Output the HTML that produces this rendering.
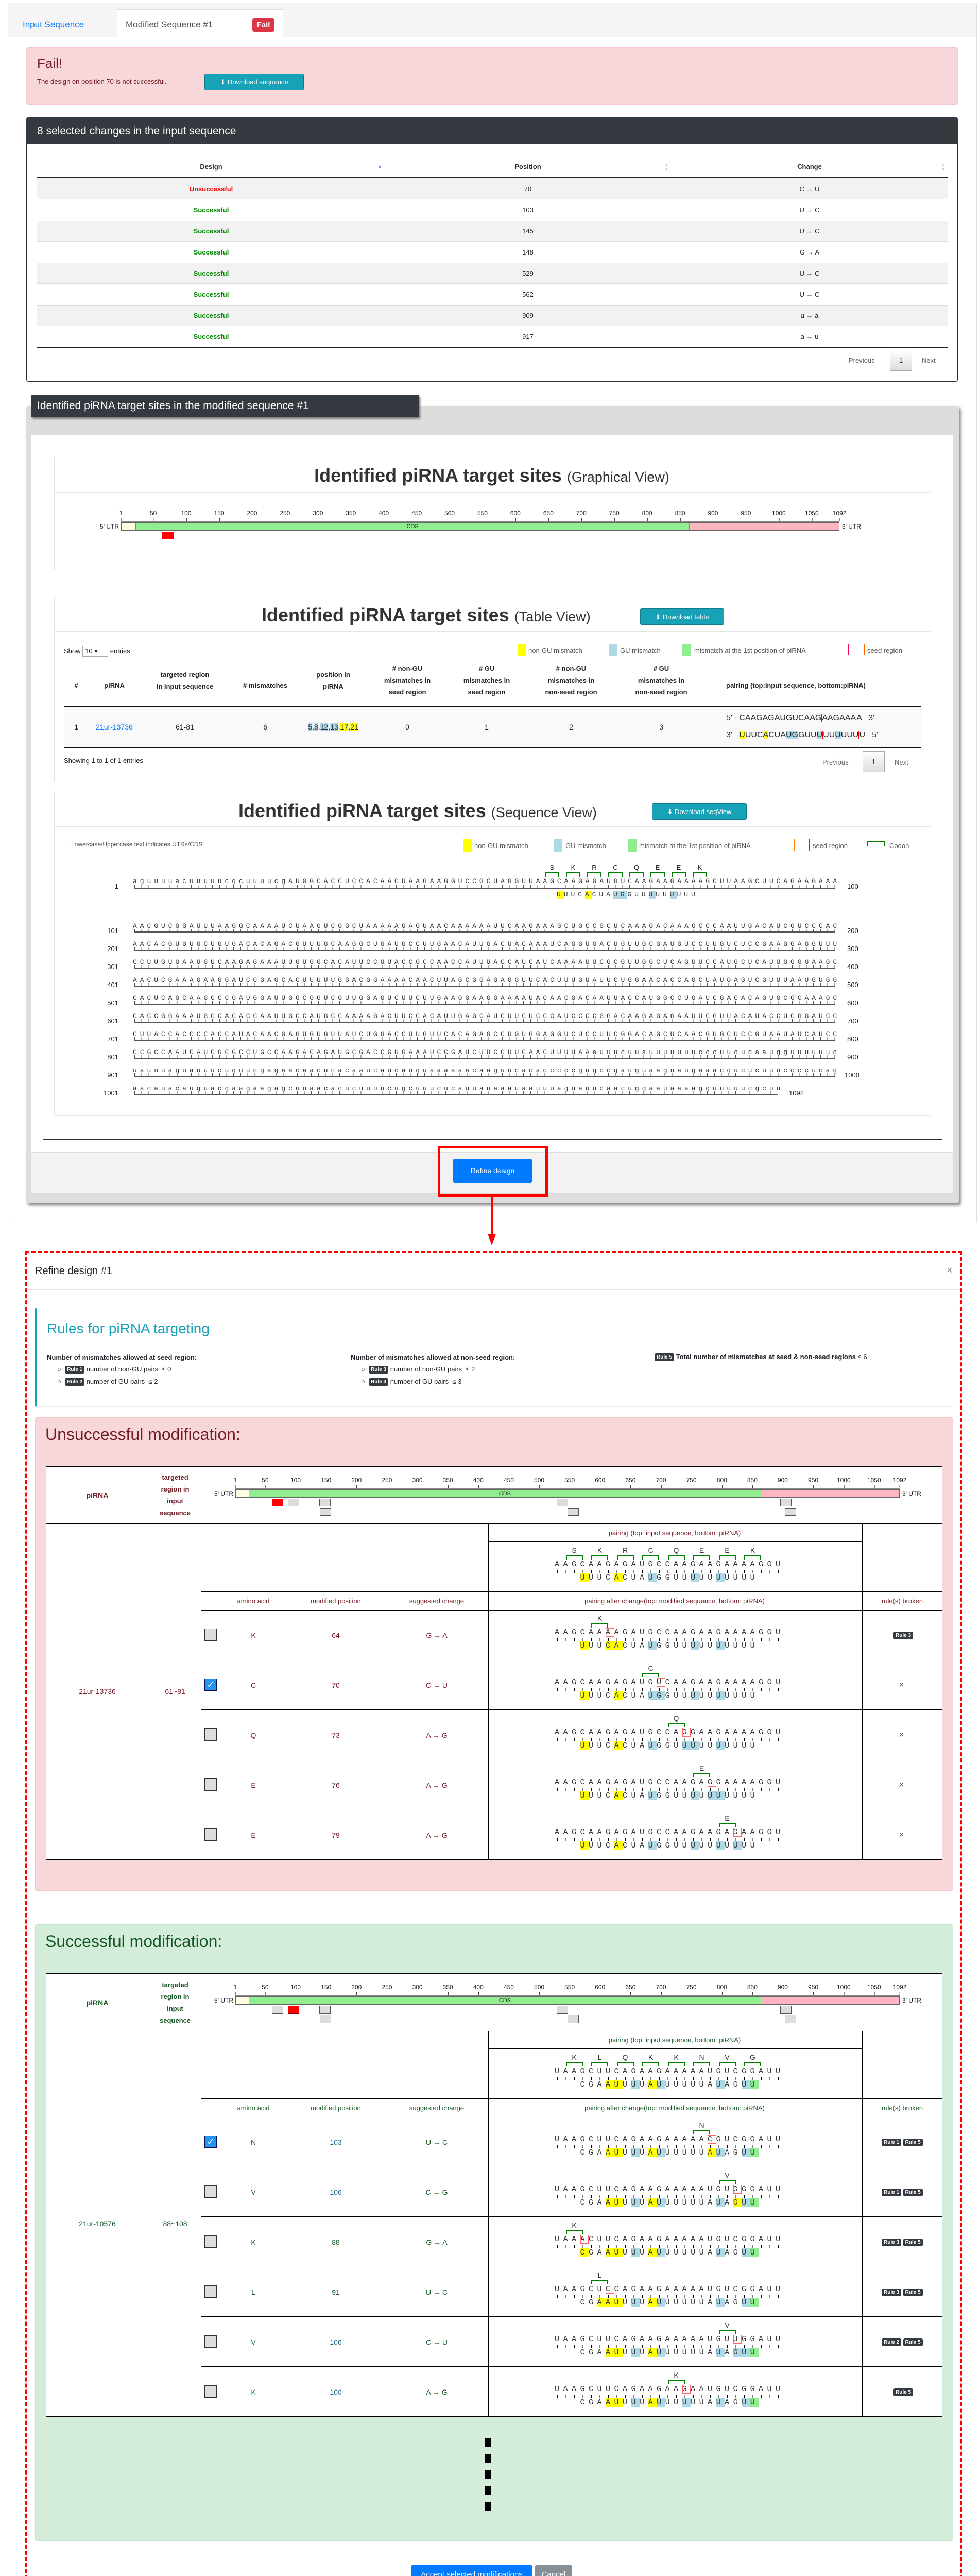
<!DOCTYPE html>
<html><head><meta charset="utf-8">
<style>
*{box-sizing:border-box;margin:0;padding:0}
html,body{margin:0;padding:0;background:#fff}
#w{width:1903px;height:5057px;position:relative;overflow:hidden;background:#fff;font-family:"Liberation Sans",sans-serif;color:#212529;font-size:13px}
.a{position:absolute}
.c{transform:translateX(-50%);white-space:nowrap}
.badge{display:inline-block;background:#343a40;color:#fff;font-size:10px;font-weight:bold;padding:2px 4px;border-radius:3px;vertical-align:middle}
.btn{position:absolute;color:#fff;border-radius:3px;text-align:center;font-size:13px}
.rul{position:absolute;height:44px}
.rul .n{position:absolute;top:0;transform:translateX(-50%);font-size:12px;line-height:16px;white-space:nowrap}
.rul .n::after{content:"";position:absolute;left:50%;top:17px;width:1px;height:7px;background:#444}
.rul .ax{position:absolute;left:0;right:0;top:23px;height:2px;background:#888}
.rul .bar{position:absolute;left:0;right:0;top:26px;height:16px;border:1px solid #666;background:#ffb6c1}
.rul .u5{position:absolute;left:0;top:0;bottom:0;width:2%;background:#fffde2;border-right:1px solid #888}
.rul .cds{position:absolute;left:2%;top:0;bottom:0;width:77.2%;background:#90ee90;border-right:1px solid #888;text-align:center;font-size:11px;line-height:14px}
.rul .l5{position:absolute;right:100%;top:26px;margin-right:4px;font-size:12px;white-space:nowrap;line-height:16px}
.rul .l3{position:absolute;left:100%;top:26px;margin-left:5px;font-size:12px;white-space:nowrap;line-height:16px}
.gb{position:absolute;width:22px;height:15px;background:#ddd;border:1px solid #555}
.rb{position:absolute;width:22px;height:15px;background:#f00;border:1px solid #800}
.seq{position:absolute;left:258px;width:1380px;overflow:hidden;font:13px/16px "Liberation Mono",monospace;letter-spacing:5.93px;white-space:pre;color:#333}
.tk{position:absolute;left:261px;height:7px;border-bottom:2px solid #555;background:repeating-linear-gradient(to right,#555 0 1px,transparent 1px 13.73px)}
.num{position:absolute;width:40px;text-align:right;left:190px;font-size:13px}
.pb{position:absolute;left:1077px;width:470px;height:90px}
.pb .am{position:absolute;top:8px;font-size:14px;transform:translateX(-50%);color:#333}
.pb .br{position:absolute;top:25px;height:9px;width:33px;border:2px solid green;border-bottom:none}
.pb .s{position:absolute;top:34px;left:0;font:15px/20px "Liberation Mono",monospace;letter-spacing:7.5px;white-space:pre;color:#333}
.pb .t{position:absolute;top:54px;left:5px;width:430px;height:7px;border-bottom:1px solid #000;background:repeating-linear-gradient(to right,#000 0 1px,transparent 1px 16.5px)}
.pb .p{top:60px;left:49.5px}
.y{background:#ffff00}.b{background:#add8e6}.g{background:#90ee90}.m{outline:1.5px solid #f66;outline-offset:-1px}
.sh{position:absolute;width:1px;background:#000}
.hl{position:absolute;height:1px;background:#000}
.cb{position:absolute;left:397px;width:24px;height:24px;background:#ddd;border:1px solid #333}
.cbk{position:absolute;left:397px;width:24px;height:24px;background:#2196f3;border:1px solid #114;color:#fff;font-size:18px;line-height:22px;text-align:center}
.cell{position:absolute;transform:translateX(-50%);font-size:14px;white-space:nowrap}
.x{position:absolute;left:1745px;font-size:18px;color:#555}
</style></head><body><div id="w">

<div class="a" style="left:15px;top:5px;width:1882px;height:2369px;border:1px solid #ddd;border-radius:3px"></div>
<div class="a" style="left:16px;top:6px;width:1880px;height:66px;background:#f5f5f5;border-bottom:1px solid #ddd"></div>
<div class="a" style="left:227px;top:18px;width:323px;height:55px;background:#fff;border:1px solid #ddd;border-bottom:none"></div>
<div class="a" style="left:44px;top:38px;font-size:17px;color:#007bff">Input Sequence</div>
<div class="a" style="left:244px;top:38px;font-size:17px;color:#495057">Modified Sequence #1</div>
<div class="a" style="left:490px;top:35px;width:43px;height:27px;background:#dc3545;color:#fff;font-weight:bold;border-radius:4px;text-align:center;line-height:27px;font-size:15px">Fail</div>

<div class="a" style="left:51px;top:92px;width:1809px;height:111px;background:#f8d7da;border:1px solid #f5c6cb;border-radius:4px"></div>
<div class="a" style="left:72px;top:108px;font-size:26px;color:#721c24">Fail!</div>
<div class="a" style="left:72px;top:151px;font-size:13px;color:#721c24">The design on position 70 is not successful.</div>
<div class="btn" style="left:397px;top:143px;width:193px;height:32px;background:#17a2b8;line-height:32px;border:1px solid #117a8b">&#11015; Download sequence</div>

<div class="a" style="left:51px;top:228px;width:1809px;height:513px;border:1px solid #333;border-radius:4px"></div>
<div class="a" style="left:51px;top:228px;width:1809px;height:52px;background:#343a40;border-radius:4px 4px 0 0"></div>
<div class="a" style="left:72px;top:243px;font-size:21px;color:#fff">8 selected changes in the input sequence</div>
<div class="hl" style="left:72px;top:300px;width:1769px;background:#ddd"></div>
<div class="hl" style="left:72px;top:344px;width:1769px;height:2px;background:#222"></div>
<div class="cell" style="left:410px;top:316px;font-weight:bold;font-size:13px">Design</div>
<div class="cell" style="left:1025px;top:316px;font-weight:bold;font-size:13px">Position</div>
<div class="cell" style="left:1572px;top:316px;font-weight:bold;font-size:13px">Change</div>
<div class="a" style="left:733px;top:320px;color:#7a7ae0;font-size:9px">&#9660;</div>
<div class="a" style="left:1290px;top:316px;color:#ccc;font-size:9px;line-height:8px">&#9650;<br>&#9660;</div>
<div class="a" style="left:1827px;top:316px;color:#ccc;font-size:9px;line-height:8px">&#9650;<br>&#9660;</div>
<div class="a" style="left:72px;top:346px;width:1769px;height:41px;background:#f2f2f2"></div>
<div class="a" style="left:72px;top:428px;width:1769px;height:41px;background:#f2f2f2;border-top:1px solid #ddd;border-bottom:1px solid #ddd"></div>
<div class="a" style="left:72px;top:510px;width:1769px;height:41px;background:#f2f2f2;border-top:1px solid #ddd;border-bottom:1px solid #ddd"></div>
<div class="a" style="left:72px;top:592px;width:1769px;height:41px;background:#f2f2f2;border-top:1px solid #ddd;border-bottom:1px solid #ddd"></div>
<div class="hl" style="left:72px;top:673px;width:1769px;height:2px;background:#222"></div>
<div class="cell" style="left:410px;top:359px;color:#f00;font-weight:bold;font-size:13px">Unsuccessful</div>
<div class="cell" style="left:410px;top:400px;color:#080;font-weight:bold;font-size:13px">Successful</div>
<div class="cell" style="left:410px;top:441px;color:#080;font-weight:bold;font-size:13px">Successful</div>
<div class="cell" style="left:410px;top:482px;color:#080;font-weight:bold;font-size:13px">Successful</div>
<div class="cell" style="left:410px;top:523px;color:#080;font-weight:bold;font-size:13px">Successful</div>
<div class="cell" style="left:410px;top:564px;color:#080;font-weight:bold;font-size:13px">Successful</div>
<div class="cell" style="left:410px;top:605px;color:#080;font-weight:bold;font-size:13px">Successful</div>
<div class="cell" style="left:410px;top:646px;color:#080;font-weight:bold;font-size:13px">Successful</div>
<div class="cell" style="left:1025px;top:359px;font-size:13px">70</div>
<div class="cell" style="left:1025px;top:400px;font-size:13px">103</div>
<div class="cell" style="left:1025px;top:441px;font-size:13px">145</div>
<div class="cell" style="left:1025px;top:482px;font-size:13px">148</div>
<div class="cell" style="left:1025px;top:523px;font-size:13px">529</div>
<div class="cell" style="left:1025px;top:564px;font-size:13px">562</div>
<div class="cell" style="left:1025px;top:605px;font-size:13px">909</div>
<div class="cell" style="left:1025px;top:646px;font-size:13px">917</div>
<div class="cell" style="left:1572px;top:359px;font-size:13px">C → U</div>
<div class="cell" style="left:1572px;top:400px;font-size:13px">U → C</div>
<div class="cell" style="left:1572px;top:441px;font-size:13px">U → C</div>
<div class="cell" style="left:1572px;top:482px;font-size:13px">G → A</div>
<div class="cell" style="left:1572px;top:523px;font-size:13px">U → C</div>
<div class="cell" style="left:1572px;top:564px;font-size:13px">U → C</div>
<div class="cell" style="left:1572px;top:605px;font-size:13px">u → a</div>
<div class="cell" style="left:1572px;top:646px;font-size:13px">a → u</div>
<div class="a" style="left:1648px;top:692px;color:#666;font-size:13px">Previous</div>
<div class="a" style="left:1728px;top:679px;width:43px;height:41px;border:1px solid #aaa;background:linear-gradient(#fff,#ddd);text-align:center;line-height:39px;color:#333;font-size:13px">1</div>
<div class="a" style="left:1790px;top:692px;color:#666;font-size:13px">Next</div>

<div class="a" style="left:51px;top:788px;width:1812px;height:1547px;background:#ddd;box-shadow:3px 4px 6px #888;border-radius:4px"></div>
<div class="a" style="left:61px;top:767px;width:753px;height:43px;background:#343a40;box-shadow:2px 3px 4px #777"></div>
<div class="a" style="left:72px;top:776px;font-size:21px;color:#fff">Identified piRNA target sites in the modified sequence #1</div>
<div class="a" style="left:61px;top:845px;width:1790px;height:1391px;background:#fff"></div>
<div class="a" style="left:61px;top:2236px;width:1790px;height:79px;background:#f2f2f2;border-top:1px solid #ddd"></div>
<div class="hl" style="left:83px;top:865px;width:1747px;background:#333"></div>
<div class="hl" style="left:83px;top:2211px;width:1747px;background:#333"></div>

<div class="a" style="left:105px;top:887px;width:1703px;height:220px;border:1px solid #e5e5e5"></div>
<div class="hl" style="left:105px;top:955px;width:1703px;background:#e5e5e5"></div>
<div class="a c" style="left:955px;top:902px;font-size:36px;font-weight:bold;color:#333">Identified piRNA target sites <span style="font-weight:normal;font-size:27px">(Graphical View)</span></div>
<div class="rul" style="left:235px;top:988px;width:1395px">
<span class="n" style="left:0%">1</span><span class="n" style="left:4.49%">50</span><span class="n" style="left:9.07%">100</span><span class="n" style="left:13.66%">150</span><span class="n" style="left:18.24%">200</span><span class="n" style="left:22.82%">250</span><span class="n" style="left:27.41%">300</span><span class="n" style="left:31.99%">350</span><span class="n" style="left:36.57%">400</span><span class="n" style="left:41.16%">450</span><span class="n" style="left:45.74%">500</span><span class="n" style="left:50.32%">550</span><span class="n" style="left:54.9%">600</span><span class="n" style="left:59.49%">650</span><span class="n" style="left:64.07%">700</span><span class="n" style="left:68.65%">750</span><span class="n" style="left:73.24%">800</span><span class="n" style="left:77.82%">850</span><span class="n" style="left:82.4%">900</span><span class="n" style="left:86.98%">950</span><span class="n" style="left:91.57%">1000</span><span class="n" style="left:96.15%">1050</span><span class="n" style="left:100%">1092</span>
<div class="ax"></div><div class="bar"><div class="u5"></div><div class="cds">CDS</div></div><span class="l5">5' UTR</span><span class="l3">3' UTR</span></div>
<div class="rb" style="left:314px;top:1032px;width:24px"></div>

<div class="a" style="left:105px;top:1156px;width:1703px;height:362px;border:1px solid #e5e5e5"></div>
<div class="hl" style="left:105px;top:1225px;width:1703px;background:#e5e5e5"></div>
<div class="a" style="left:508px;top:1173px;font-size:36px;font-weight:bold;color:#333;white-space:nowrap">Identified piRNA target sites <span style="font-weight:normal;font-size:27px">(Table View)</span></div>
<div class="btn" style="left:1243px;top:1181px;width:163px;height:32px;background:#17a2b8;line-height:32px;border:1px solid #117a8b">&#11015; Download table</div>
<div class="a" style="left:124px;top:1253px;font-size:13px">Show <span style="display:inline-block;border:1px solid #aaa;padding:2px 4px;width:50px">10 &#9662;</span> entries</div>
<div class="a" style="left:1005px;top:1250px;width:16px;height:24px;background:#ff0"></div>
<div class="a" style="left:1026px;top:1255px;font-size:13px;color:#555">non-GU mismatch</div>
<div class="a" style="left:1183px;top:1250px;width:16px;height:24px;background:#add8e6"></div>
<div class="a" style="left:1204px;top:1255px;font-size:13px;color:#555">GU mismatch</div>
<div class="a" style="left:1325px;top:1250px;width:16px;height:24px;background:#90ee90"></div>
<div class="a" style="left:1348px;top:1255px;font-size:13px;color:#555">mismatch at the 1st position of piRNA</div>
<div class="a" style="left:1647px;top:1250px;width:2px;height:22px;background:#f06"></div>
<div class="a" style="left:1677px;top:1250px;width:2px;height:22px;background:#f60"></div>
<div class="a" style="left:1684px;top:1255px;font-size:13px;color:#555">seed region</div>
<div class="cell" style="left:148px;top:1323px;font-weight:bold;font-size:13px">#</div>
<div class="cell" style="left:222px;top:1323px;font-weight:bold;font-size:13px">piRNA</div>
<div class="cell" style="left:359px;top:1298px;font-weight:bold;font-size:13px;text-align:center;line-height:23px">targeted region<br>in input sequence</div>
<div class="cell" style="left:515px;top:1323px;font-weight:bold;font-size:13px"># mismatches</div>
<div class="cell" style="left:647px;top:1298px;font-weight:bold;font-size:13px;text-align:center;line-height:23px">position in<br>piRNA</div>
<div class="cell" style="left:791px;top:1286px;font-weight:bold;font-size:13px;text-align:center;line-height:23px"># non-GU<br>mismatches in<br>seed region</div>
<div class="cell" style="left:945px;top:1286px;font-weight:bold;font-size:13px;text-align:center;line-height:23px"># GU<br>mismatches in<br>seed region</div>
<div class="cell" style="left:1109px;top:1286px;font-weight:bold;font-size:13px;text-align:center;line-height:23px"># non-GU<br>mismatches in<br>non-seed region</div>
<div class="cell" style="left:1284px;top:1286px;font-weight:bold;font-size:13px;text-align:center;line-height:23px"># GU<br>mismatches in<br>non-seed region</div>
<div class="a" style="left:1410px;top:1323px;font-weight:bold;font-size:13px">pairing (top:Input sequence, bottom:piRNA)</div>
<div class="a" style="left:124px;top:1370px;width:1664px;height:81px;background:#f9f9f9;border-top:3px solid #111;border-bottom:1px solid #111"></div>
<div class="cell" style="left:148px;top:1403px;font-weight:bold">1</div>
<div class="cell" style="left:222px;top:1403px;color:#007bff">21ur-13736</div>
<div class="cell" style="left:359px;top:1403px">61-81</div>
<div class="cell" style="left:515px;top:1403px">6</div>
<div class="cell" style="left:647px;top:1403px"><span class="b">5</span>,<span class="b">8</span>,<span class="b">12</span>,<span class="b">13</span>,<span class="y">17</span>,<span class="y">21</span></div>
<div class="cell" style="left:791px;top:1403px">0</div>
<div class="cell" style="left:945px;top:1403px">1</div>
<div class="cell" style="left:1109px;top:1403px">2</div>
<div class="cell" style="left:1284px;top:1403px">3</div>
<div class="a" style="left:1410px;top:1385px;font-size:16px;white-space:pre">5'   CAAGAGAUGUCAAG<span style="border-left:1px solid red">AAGAAA</span><span style="border-left:1px solid red">A</span>   3'</div>
<div class="a" style="left:1410px;top:1418px;font-size:16px;white-space:pre">3'   <span class="y">U</span>UUC<span class="y">A</span>CUA<span class="b">UG</span>GUU<span class="b">U</span><span style="border-left:1px solid red">UU<span class="b">U</span>UUU</span><span style="border-left:1px solid red">U</span>   5'</div>
<div class="a" style="left:124px;top:1469px;font-size:13px">Showing 1 to 1 of 1 entries</div>
<div class="a" style="left:1597px;top:1472px;color:#666;font-size:13px">Previous</div>
<div class="a" style="left:1675px;top:1458px;width:43px;height:41px;border:1px solid #aaa;background:linear-gradient(#fff,#ddd);text-align:center;line-height:39px;font-size:13px">1</div>
<div class="a" style="left:1737px;top:1472px;color:#666;font-size:13px">Next</div>

<div class="a" style="left:105px;top:1535px;width:1703px;height:631px;border:1px solid #e5e5e5"></div>
<div class="hl" style="left:105px;top:1604px;width:1703px;background:#e5e5e5"></div>
<div class="a" style="left:463px;top:1553px;font-size:36px;font-weight:bold;color:#333;white-space:nowrap">Identified piRNA target sites <span style="font-weight:normal;font-size:27px">(Sequence View)</span></div>
<div class="btn" style="left:1266px;top:1559px;width:184px;height:32px;background:#17a2b8;line-height:32px;border:1px solid #117a8b">&#11015; Download seqView</div>
<div class="a" style="left:138px;top:1632px;font-size:12px;color:#555">Lowercase/Uppercase text indicates UTRs/CDS</div>
<div class="a" style="left:900px;top:1629px;width:16px;height:24px;background:#ff0"></div>
<div class="a" style="left:921px;top:1634px;font-size:13px;color:#555">non-GU mismatch</div>
<div class="a" style="left:1076px;top:1629px;width:16px;height:24px;background:#add8e6"></div>
<div class="a" style="left:1098px;top:1634px;font-size:13px;color:#555">GU mismatch</div>
<div class="a" style="left:1220px;top:1629px;width:16px;height:24px;background:#90ee90"></div>
<div class="a" style="left:1241px;top:1634px;font-size:13px;color:#555">mismatch at the 1st position of piRNA</div>
<div class="a" style="left:1541px;top:1629px;width:2px;height:22px;background:#f80"></div>
<div class="a" style="left:1571px;top:1629px;width:2px;height:22px;background:#f06"></div>
<div class="a" style="left:1578px;top:1634px;font-size:13px;color:#555">seed region</div>
<div class="a" style="left:1684px;top:1633px;width:34px;height:10px;border:2px solid green;border-bottom:none"></div>
<div class="a" style="left:1727px;top:1634px;font-size:13px;color:#555">Codon</div>

<div class="a c" style="left:1072px;top:1676px;font-size:13px">S</div>
<div class="a c" style="left:1113px;top:1676px;font-size:13px">K</div>
<div class="a c" style="left:1154px;top:1676px;font-size:13px">R</div>
<div class="a c" style="left:1195px;top:1676px;font-size:13px">C</div>
<div class="a c" style="left:1236px;top:1676px;font-size:13px">Q</div>
<div class="a c" style="left:1277px;top:1676px;font-size:13px">E</div>
<div class="a c" style="left:1318px;top:1676px;font-size:13px">E</div>
<div class="a c" style="left:1359px;top:1676px;font-size:13px">K</div>
<div class="a" style="left:1058px;top:1692px;width:28px;height:11px;border:2px solid green;border-bottom:none"></div>
<div class="a" style="left:1099px;top:1692px;width:28px;height:11px;border:2px solid green;border-bottom:none"></div>
<div class="a" style="left:1140px;top:1692px;width:28px;height:11px;border:2px solid green;border-bottom:none"></div>
<div class="a" style="left:1181px;top:1692px;width:28px;height:11px;border:2px solid green;border-bottom:none"></div>
<div class="a" style="left:1222px;top:1692px;width:28px;height:11px;border:2px solid green;border-bottom:none"></div>
<div class="a" style="left:1263px;top:1692px;width:28px;height:11px;border:2px solid green;border-bottom:none"></div>
<div class="a" style="left:1304px;top:1692px;width:28px;height:11px;border:2px solid green;border-bottom:none"></div>
<div class="a" style="left:1345px;top:1692px;width:28px;height:11px;border:2px solid green;border-bottom:none"></div>

<div class="num" style="top:1713px">1</div>
<div class="seq" style="top:1703px">aguuuuacuuuuucgcuuuucgAUGGCACCUCCACAACUAAGAAGGUCCGCUAGGUUAAGCAAGAGAUGUCAAGAAGAAAAGCUUAAGCUUCAGAAGAAA</div>
<div class="tk" style="top:1718px;width:1360px"></div>
<div class="a" style="left:1645px;top:1713px;font-size:13px">100</div>
<div class="seq" style="top:1729px;left:1081px;width:300px"><span class="y">U</span>UUC<span class="y">A</span>CUA<span class="b">UG</span>GUU<span class="b">U</span>UU<span class="b">U</span>UUU</div>

<div class="num" style="top:1799px">101</div><div class="seq" style="top:1790px">AACGUCGGAUUUAAGGCAAAAUCUAAGUCGGCUAAAAAGAGUAACAAAAAAUUCAAGAAAGCUGCCGCUCAAAGACAAAGCCCAAUUGACAUCGUCCCAC</div><div class="tk" style="top:1803px;width:1360px"></div><div class="a" style="left:1645px;top:1799px">200</div>
<div class="num" style="top:1834px">201</div><div class="seq" style="top:1825px">AACACGUGUGCUGUGACACAGACGUUUGCAAGGCUGAUGCCUUGAACAUUGACUACAAAUCAGGUGACUGUUGCGAUGUCCUUGUCUCCGAAGGAGGUUU</div><div class="tk" style="top:1838px;width:1360px"></div><div class="a" style="left:1645px;top:1834px">300</div>
<div class="num" style="top:1869px">301</div><div class="seq" style="top:1860px">CCUUGUGAAUGUCAAGAGAAAUUGUGGCACAUUCCUUACCGCCAACCAUUUACCAUCAUCAAAAUUCGCGUUGGCUCAGUUCCAUGCUCAUUGGGGAAGC</div><div class="tk" style="top:1873px;width:1360px"></div><div class="a" style="left:1645px;top:1869px">400</div>
<div class="num" style="top:1904px">401</div><div class="seq" style="top:1895px">AACUCGAAAGAAGGAUCCGAGCACUUUUUGGACGGAAAACAACUUAGCGGAGAGGUUCACUUUGUAUUCUGGAACACCAGCUAUGAGUCGUUUAAUGUGG</div><div class="tk" style="top:1908px;width:1360px"></div><div class="a" style="left:1645px;top:1904px">500</div>
<div class="num" style="top:1939px">501</div><div class="seq" style="top:1930px">CACUCAGCAAGCCCGAUGGAUUGGCGGUCGUUGGAGUCUUCUUGAAGGAAGGAAAAUACAACGACAAUUACCAUGGCCUGAUCGACACAGUGCGCAAAGC</div><div class="tk" style="top:1943px;width:1360px"></div><div class="a" style="left:1645px;top:1939px">600</div>
<div class="num" style="top:1974px">601</div><div class="seq" style="top:1965px">CACCGGAAAUGCCACACCAAUUGCCAUGCCAAAAGACUUCCACAUUGAGCAUCUUCUCCCAUCCCCGGACAAGAGAGAAUUCGUUACAUACCUCGGAUCC</div><div class="tk" style="top:1978px;width:1360px"></div><div class="a" style="left:1645px;top:1974px">700</div>
<div class="num" style="top:2009px">701</div><div class="seq" style="top:2000px">CUUACCACCCCACCAUACAACGAGUGUGUUAUCUGGACCUUGUUCACAGAGCCUGUGGAGGUCUCCUUCGGACAGCUCAACGUGCUCCGUAAUAUCAUCC</div><div class="tk" style="top:2013px;width:1360px"></div><div class="a" style="left:1645px;top:2009px">800</div>
<div class="num" style="top:2044px">801</div><div class="seq" style="top:2035px">CCGCCAAUCAUCGCGCCUGCCAAGACAGAUGCGACCGUGAAAUCCGAUCUUCCUUCAACUUUUAAauuucuuauuuuuuucccuucucaaugguuuuuuc</div><div class="tk" style="top:2048px;width:1360px"></div><div class="a" style="left:1645px;top:2044px">900</div>
<div class="num" style="top:2079px">901</div><div class="seq" style="top:2070px">uauuuaguauuucuguucgagaacaacucacaaucaucauguaaaaaacaaguucacacccccgugccgauguaaguaugaaacgucucuuuccccucag</div><div class="tk" style="top:2083px;width:1360px"></div><div class="a" style="left:1640px;top:2079px">1000</div>
<div class="num" style="top:2114px">1001</div><div class="seq" style="top:2105px;width:1265px">aacauacauguacgaagaagagcuuaacacucuuuucugcuuucucauuauaaauaauuuaguauucaacuggaauaaaagguuuuucgcuu</div><div class="tk" style="top:2118px;width:1250px"></div><div class="a" style="left:1532px;top:2114px">1092</div>

<div class="btn" style="left:880px;top:2249px;width:153px;height:47px;background:#007bff;line-height:47px;font-size:14px">Refine design</div>
<div class="a" style="left:850px;top:2224px;width:214px;height:99px;border:5px solid #f00"></div>
<div class="a" style="left:953px;top:2323px;width:4px;height:85px;background:#f00"></div>
<div class="a" style="left:947px;top:2395px;width:0;height:0;border-left:8px solid transparent;border-right:8px solid transparent;border-top:22px solid #f00"></div>

<div class="a" style="left:49px;top:2428px;width:1820px;height:2603px;border:4px dashed #f00"></div>
<div class="a" style="left:68px;top:2456px;font-size:20px;color:#222">Refine design #1</div>
<div class="a" style="left:1838px;top:2455px;font-size:20px;color:#888">×</div>
<div class="hl" style="left:54px;top:2502px;width:1810px;background:#e5e5e5"></div>

<div class="a" style="left:68px;top:2538px;width:1783px;height:193px;border:1px solid #eee;border-left:4px solid #17a2b8;border-radius:3px"></div>
<div class="a" style="left:91px;top:2563px;font-size:28px;color:#17a2b8">Rules for piRNA targeting</div>
<div class="a" style="left:91px;top:2627px;font-size:13px;font-weight:bold">Number of mismatches allowed at seed region:</div>
<div class="a" style="left:111px;top:2650px;font-size:13px">○ &nbsp;<span class="badge">Rule 1</span> number of non-GU pairs &nbsp;≤ 0</div>
<div class="a" style="left:111px;top:2674px;font-size:13px">○ &nbsp;<span class="badge">Rule 2</span> number of GU pairs &nbsp;≤ 2</div>
<div class="a" style="left:681px;top:2627px;font-size:13px;font-weight:bold">Number of mismatches allowed at non-seed region:</div>
<div class="a" style="left:701px;top:2650px;font-size:13px">○ &nbsp;<span class="badge">Rule 3</span> number of non-GU pairs &nbsp;≤ 2</div>
<div class="a" style="left:701px;top:2674px;font-size:13px">○ &nbsp;<span class="badge">Rule 4</span> number of GU pairs &nbsp;≤ 3</div>
<div class="a" style="left:1271px;top:2626px;font-size:13px;font-weight:bold"><span class="badge">Rule 5</span> Total number of mismatches at seed &amp; non-seed regions <span style="font-weight:normal">≤ 6</span></div>

<div class="a" style="left:68px;top:2751px;width:1783px;height:919px;background:#f8d7da;border:1px solid #f5c6cb;border-radius:4px"></div>
<div class="a" style="left:88px;top:2766px;font-size:32px;color:#721c24">Unsuccessful modification:</div>
<div class="a" style="left:89px;top:2846px;width:1741px;height:764px;background:#fff;border-top:2px solid #000;border-bottom:2px solid #000"></div>
<div class="sh" style="left:289px;top:2847px;height:763px"></div>
<div class="sh" style="left:390px;top:2847px;height:763px"></div>
<div class="hl" style="left:89px;top:2957px;width:1741px"></div>
<div class="cell" style="left:189px;top:2894px;font-weight:bold;color:#721c24;font-size:14px">piRNA</div>
<div class="cell" style="left:340px;top:2856px;font-weight:bold;color:#721c24;font-size:13px;text-align:center;line-height:23px">targeted<br>region in<br>input<br>sequence</div>
<div class="rul" style="left:457px;top:2865px;width:1290px">
<span class="n" style="left:0%">1</span><span class="n" style="left:4.49%">50</span><span class="n" style="left:9.07%">100</span><span class="n" style="left:13.66%">150</span><span class="n" style="left:18.24%">200</span><span class="n" style="left:22.82%">250</span><span class="n" style="left:27.41%">300</span><span class="n" style="left:31.99%">350</span><span class="n" style="left:36.57%">400</span><span class="n" style="left:41.16%">450</span><span class="n" style="left:45.74%">500</span><span class="n" style="left:50.32%">550</span><span class="n" style="left:54.9%">600</span><span class="n" style="left:59.49%">650</span><span class="n" style="left:64.07%">700</span><span class="n" style="left:68.65%">750</span><span class="n" style="left:73.24%">800</span><span class="n" style="left:77.82%">850</span><span class="n" style="left:82.4%">900</span><span class="n" style="left:86.98%">950</span><span class="n" style="left:91.57%">1000</span><span class="n" style="left:96.15%">1050</span><span class="n" style="left:100%">1092</span>
<div class="ax"></div><div class="bar"><div class="u5"></div><div class="cds">CDS</div></div><span class="l5">5' UTR</span><span class="l3">3' UTR</span></div>
<div class="rb" style="left:528px;top:2909px"></div>
<div class="gb" style="left:559px;top:2909px"></div>
<div class="gb" style="left:620px;top:2909px"></div>
<div class="gb" style="left:1081px;top:2909px"></div>
<div class="gb" style="left:1515px;top:2909px"></div>
<div class="gb" style="left:621px;top:2927px"></div>
<div class="gb" style="left:1102px;top:2927px"></div>
<div class="gb" style="left:1524px;top:2927px"></div>
<div class="sh" style="left:948px;top:2957px;height:653px"></div>
<div class="sh" style="left:1674px;top:2957px;height:653px"></div>
<div class="sh" style="left:749px;top:3089px;height:521px"></div>
<div class="hl" style="left:948px;top:2992px;width:726px"></div>
<div class="hl" style="left:390px;top:3089px;width:1440px"></div>
<div class="hl" style="left:390px;top:3125px;width:1440px"></div>
<div class="hl" style="left:390px;top:3222px;width:1440px"></div>
<div class="hl" style="left:390px;top:3318px;width:1440px;height:2px"></div>
<div class="hl" style="left:390px;top:3416px;width:1440px"></div>
<div class="hl" style="left:390px;top:3513px;width:1440px"></div>
<div class="cell" style="left:1310px;top:2968px;font-size:13px;color:#721c24">pairing (top: input sequence, bottom: piRNA)</div>
<div class="pb" style="top:2993px">
<span class="am" style="left:38px">S</span><span class="am" style="left:87.5px">K</span><span class="am" style="left:137px">R</span><span class="am" style="left:186.5px">C</span><span class="am" style="left:236px">Q</span><span class="am" style="left:285.5px">E</span><span class="am" style="left:335px">E</span><span class="am" style="left:384.5px">K</span>
<span class="br" style="left:21.5px"></span><span class="br" style="left:71px"></span><span class="br" style="left:120.5px"></span><span class="br" style="left:170px"></span><span class="br" style="left:219.5px"></span><span class="br" style="left:269px"></span><span class="br" style="left:318.5px"></span><span class="br" style="left:368px"></span>
<span class="s">AAGCAAGAGAUGCCAAGAAGAAAAGGU</span><span class="t"></span>
<span class="s p"><span class="y">U</span>UUC<span class="y">A</span>CUA<span class="b">U</span>GGUU<span class="b">U</span>UU<span class="b">U</span>UUUU</span></div>
<div class="cell" style="left:492px;top:3100px;font-size:13px;color:#721c24">amino acid</div>
<div class="cell" style="left:652px;top:3100px;font-size:13px;color:#721c24">modified position</div>
<div class="cell" style="left:848px;top:3100px;font-size:13px;color:#721c24">suggested change</div>
<div class="cell" style="left:1310px;top:3100px;font-size:13px;color:#721c24">pairing after change(top: modified sequence, bottom: piRNA)</div>
<div class="cell" style="left:1752px;top:3100px;font-size:13px;color:#721c24">rule(s) broken</div>
<div class="cell" style="left:189px;top:3275px;color:#721c24">21ur-13736</div>
<div class="cell" style="left:340px;top:3275px;color:#721c24">61~81</div>
<div class="cb" style="top:3161px"></div><div class="cell" style="left:492px;top:3166px;color:#721c24">K</div><div class="cell" style="left:652px;top:3166px;color:#721c24">64</div><div class="cell" style="left:848px;top:3166px;color:#721c24">G → A</div><div class="a" style="left:1735px;top:3166px"><span class="badge">Rule 3</span></div>
<div class="pb" style="top:3125px"><span class="am" style="left:87.5px">K</span><span class="br" style="left:71px"></span><span class="s">AAGCAA<span class="m">A</span>AGAUGCCAAGAAGAAAAGGU</span><span class="t"></span><span class="s p"><span class="y">U</span>UU<span class="y">CA</span>CUA<span class="b">U</span>GGUU<span class="b">U</span>UU<span class="b">U</span>UUUU</span></div>
<div class="cbk" style="top:3258px">✓</div><div class="cell" style="left:492px;top:3263px;color:#721c24">C</div><div class="cell" style="left:652px;top:3263px;color:#721c24">70</div><div class="cell" style="left:848px;top:3263px;color:#721c24">C → U</div><div class="x" style="top:3260px">×</div>
<div class="pb" style="top:3222px"><span class="am" style="left:186.5px">C</span><span class="br" style="left:170px"></span><span class="s">AAGCAAGAGAUG<span class="m">U</span>CAAGAAGAAAAGGU</span><span class="t"></span><span class="s p"><span class="y">U</span>UUC<span class="y">A</span>CUA<span class="b">UG</span>GUU<span class="b">U</span>UU<span class="b">U</span>UUUU</span></div>
<div class="cb" style="top:3355px"></div><div class="cell" style="left:492px;top:3360px;color:#721c24">Q</div><div class="cell" style="left:652px;top:3360px;color:#721c24">73</div><div class="cell" style="left:848px;top:3360px;color:#721c24">A → G</div><div class="x" style="top:3357px">×</div>
<div class="pb" style="top:3319px"><span class="am" style="left:236px">Q</span><span class="br" style="left:219.5px"></span><span class="s">AAGCAAGAGAUGCCA<span class="m">G</span>GAAGAAAAGGU</span><span class="t"></span><span class="s p"><span class="y">U</span>UUC<span class="y">A</span>CUA<span class="b">U</span>GGU<span class="b">UU</span>UU<span class="b">U</span>UUUU</span></div>
<div class="cb" style="top:3452px"></div><div class="cell" style="left:492px;top:3457px;color:#721c24">E</div><div class="cell" style="left:652px;top:3457px;color:#721c24">76</div><div class="cell" style="left:848px;top:3457px;color:#721c24">A → G</div><div class="x" style="top:3454px">×</div>
<div class="pb" style="top:3416px"><span class="am" style="left:285.5px">E</span><span class="br" style="left:269px"></span><span class="s">AAGCAAGAGAUGCCAAGA<span class="m">G</span>GAAAAGGU</span><span class="t"></span><span class="s p"><span class="y">U</span>UUC<span class="y">A</span>CUA<span class="b">U</span>GGUU<span class="b">U</span>U<span class="b">UU</span>UUUU</span></div>
<div class="cb" style="top:3549px"></div><div class="cell" style="left:492px;top:3554px;color:#721c24">E</div><div class="cell" style="left:652px;top:3554px;color:#721c24">79</div><div class="cell" style="left:848px;top:3554px;color:#721c24">A → G</div><div class="x" style="top:3551px">×</div>
<div class="pb" style="top:3513px"><span class="am" style="left:335px">E</span><span class="br" style="left:318.5px"></span><span class="s">AAGCAAGAGAUGCCAAGAAGA<span class="m">G</span>AAGGU</span><span class="t"></span><span class="s p"><span class="y">U</span>UUC<span class="y">A</span>CUA<span class="b">U</span>GGUU<span class="b">U</span>UU<span class="b">U</span>U<span class="b">U</span>UU</span></div>

<div class="a" style="left:68px;top:3735px;width:1783px;height:1197px;background:#d4edda;border:1px solid #c3e6cb;border-radius:4px"></div>
<div class="a" style="left:88px;top:3750px;font-size:32px;color:#155724">Successful modification:</div>
<div class="a" style="left:89px;top:3830px;width:1741px;height:861px;background:#fff;border-top:2px solid #000;border-bottom:2px solid #000"></div>
<div class="sh" style="left:289px;top:3831px;height:860px"></div>
<div class="sh" style="left:390px;top:3831px;height:860px"></div>
<div class="hl" style="left:89px;top:3942px;width:1741px"></div>
<div class="cell" style="left:189px;top:3879px;font-weight:bold;color:#155724;font-size:14px">piRNA</div>
<div class="cell" style="left:340px;top:3841px;font-weight:bold;color:#155724;font-size:13px;text-align:center;line-height:23px">targeted<br>region in<br>input<br>sequence</div>
<div class="rul" style="left:457px;top:3849px;width:1290px">
<span class="n" style="left:0%">1</span><span class="n" style="left:4.49%">50</span><span class="n" style="left:9.07%">100</span><span class="n" style="left:13.66%">150</span><span class="n" style="left:18.24%">200</span><span class="n" style="left:22.82%">250</span><span class="n" style="left:27.41%">300</span><span class="n" style="left:31.99%">350</span><span class="n" style="left:36.57%">400</span><span class="n" style="left:41.16%">450</span><span class="n" style="left:45.74%">500</span><span class="n" style="left:50.32%">550</span><span class="n" style="left:54.9%">600</span><span class="n" style="left:59.49%">650</span><span class="n" style="left:64.07%">700</span><span class="n" style="left:68.65%">750</span><span class="n" style="left:73.24%">800</span><span class="n" style="left:77.82%">850</span><span class="n" style="left:82.4%">900</span><span class="n" style="left:86.98%">950</span><span class="n" style="left:91.57%">1000</span><span class="n" style="left:96.15%">1050</span><span class="n" style="left:100%">1092</span>
<div class="ax"></div><div class="bar"><div class="u5"></div><div class="cds">CDS</div></div><span class="l5">5' UTR</span><span class="l3">3' UTR</span></div>
<div class="gb" style="left:528px;top:3893px;height:16px"></div>
<div class="rb" style="left:559px;top:3893px;height:16px"></div>
<div class="gb" style="left:620px;top:3893px;height:16px"></div>
<div class="gb" style="left:1081px;top:3893px;height:16px"></div>
<div class="gb" style="left:1515px;top:3893px;height:16px"></div>
<div class="gb" style="left:621px;top:3911px;height:16px"></div>
<div class="gb" style="left:1102px;top:3911px;height:16px"></div>
<div class="gb" style="left:1524px;top:3911px;height:16px"></div>
<div class="sh" style="left:948px;top:3942px;height:749px"></div>
<div class="sh" style="left:1674px;top:3942px;height:749px"></div>
<div class="sh" style="left:749px;top:4073px;height:618px"></div>
<div class="hl" style="left:948px;top:3976px;width:726px"></div>
<div class="hl" style="left:390px;top:4072px;width:1440px;height:2px"></div>
<div class="hl" style="left:390px;top:4109px;width:1440px"></div>
<div class="hl" style="left:390px;top:4206px;width:1440px"></div>
<div class="hl" style="left:390px;top:4302px;width:1440px;height:2px"></div>
<div class="hl" style="left:390px;top:4400px;width:1440px"></div>
<div class="hl" style="left:390px;top:4496px;width:1440px"></div>
<div class="hl" style="left:390px;top:4592px;width:1440px;height:2px"></div>
<div class="cell" style="left:1310px;top:3952px;font-size:13px;color:#155724">pairing (top: input sequence, bottom: piRNA)</div>
<div class="pb" style="top:3977px">
<span class="am" style="left:38px">K</span><span class="am" style="left:87.5px">L</span><span class="am" style="left:137px">Q</span><span class="am" style="left:186.5px">K</span><span class="am" style="left:236px">K</span><span class="am" style="left:285.5px">N</span><span class="am" style="left:335px">V</span><span class="am" style="left:384.5px">G</span>
<span class="br" style="left:21.5px"></span><span class="br" style="left:71px"></span><span class="br" style="left:120.5px"></span><span class="br" style="left:170px"></span><span class="br" style="left:219.5px"></span><span class="br" style="left:269px"></span><span class="br" style="left:318.5px"></span><span class="br" style="left:368px"></span>
<span class="s">UAAGCUUCAGAAGAAAAAUGUCGGAUU</span><span class="t"></span>
<span class="s p">CGA<span class="y">AU</span>U<span class="b">U</span>U<span class="y">A</span><span class="b">U</span>UUUUUA<span class="b">U</span>AG<span class="b">U</span><span class="g">U</span></span></div>
<div class="cell" style="left:492px;top:4084px;font-size:13px;color:#155724">amino acid</div>
<div class="cell" style="left:652px;top:4084px;font-size:13px;color:#155724">modified position</div>
<div class="cell" style="left:848px;top:4084px;font-size:13px;color:#155724">suggested change</div>
<div class="cell" style="left:1310px;top:4084px;font-size:13px;color:#155724">pairing after change(top: modified sequence, bottom: piRNA)</div>
<div class="cell" style="left:1752px;top:4084px;font-size:13px;color:#155724">rule(s) broken</div>
<div class="cell" style="left:189px;top:4308px;color:#155724">21ur-10576</div>
<div class="cell" style="left:340px;top:4308px;color:#155724">88~108</div>

<div class="cbk" style="top:4145px">✓</div><div class="cell" style="left:492px;top:4150px;color:#155724">N</div><div class="cell" style="left:652px;top:4150px;color:#1a6f8a">103</div><div class="cell" style="left:848px;top:4150px;color:#155724">U → C</div><div class="a" style="left:1712px;top:4150px"><span class="badge">Rule 1</span> <span class="badge">Rule 5</span></div>
<div class="pb" style="top:4109px"><span class="am" style="left:285.5px">N</span><span class="br" style="left:269px"></span><span class="s">UAAGCUUCAGAAGAAAAA<span class="m">C</span>GUCGGAUU</span><span class="t"></span><span class="s p">CGA<span class="y">AU</span>U<span class="b">U</span>U<span class="y">A</span><span class="b">U</span>UUUUU<span class="y">A</span><span class="b">U</span>AG<span class="b">U</span><span class="g">U</span></span></div>
<div class="cb" style="top:4242px"></div><div class="cell" style="left:492px;top:4247px;color:#155724">V</div><div class="cell" style="left:652px;top:4247px;color:#1a6f8a">106</div><div class="cell" style="left:848px;top:4247px;color:#155724">C → G</div><div class="a" style="left:1712px;top:4247px"><span class="badge">Rule 1</span> <span class="badge">Rule 5</span></div>
<div class="pb" style="top:4206px"><span class="am" style="left:335px">V</span><span class="br" style="left:318.5px"></span><span class="s">UAAGCUUCAGAAGAAAAAUGU<span class="m">G</span>GGAUU</span><span class="t"></span><span class="s p">CGA<span class="y">AU</span>U<span class="b">U</span>U<span class="y">A</span><span class="b">U</span>UUUUUA<span class="b">U</span>A<span class="y">G</span><span class="b">U</span><span class="g">U</span></span></div>
<div class="cb" style="top:4339px"></div><div class="cell" style="left:492px;top:4344px;color:#155724">K</div><div class="cell" style="left:652px;top:4344px;color:#155724">88</div><div class="cell" style="left:848px;top:4344px;color:#155724">G → A</div><div class="a" style="left:1712px;top:4344px"><span class="badge">Rule 3</span> <span class="badge">Rule 5</span></div>
<div class="pb" style="top:4303px"><span class="am" style="left:38px">K</span><span class="br" style="left:21.5px"></span><span class="s">UAA<span class="m">A</span>CUUCAGAAGAAAAAUGUCGGAUU</span><span class="t"></span><span class="s p"><span class="y">C</span>GA<span class="y">AU</span>U<span class="b">U</span>U<span class="y">A</span><span class="b">U</span>UUUUUA<span class="b">U</span>AG<span class="b">U</span><span class="g">U</span></span></div>
<div class="cb" style="top:4436px"></div><div class="cell" style="left:492px;top:4441px;color:#155724">L</div><div class="cell" style="left:652px;top:4441px;color:#155724">91</div><div class="cell" style="left:848px;top:4441px;color:#155724">U → C</div><div class="a" style="left:1712px;top:4441px"><span class="badge">Rule 3</span> <span class="badge">Rule 5</span></div>
<div class="pb" style="top:4400px"><span class="am" style="left:87.5px">L</span><span class="br" style="left:71px"></span><span class="s">UAAGCU<span class="m">C</span>CAGAAGAAAAAUGUCGGAUU</span><span class="t"></span><span class="s p">CG<span class="y">AAU</span>U<span class="b">U</span>U<span class="y">A</span><span class="b">U</span>UUUUUA<span class="b">U</span>AG<span class="b">U</span><span class="g">U</span></span></div>
<div class="cb" style="top:4533px"></div><div class="cell" style="left:492px;top:4538px;color:#155724">V</div><div class="cell" style="left:652px;top:4538px;color:#1a6f8a">106</div><div class="cell" style="left:848px;top:4538px;color:#155724">C → U</div><div class="a" style="left:1712px;top:4538px"><span class="badge">Rule 2</span> <span class="badge">Rule 5</span></div>
<div class="pb" style="top:4497px"><span class="am" style="left:335px">V</span><span class="br" style="left:318.5px"></span><span class="s">UAAGCUUCAGAAGAAAAAUGU<span class="m">U</span>GGAUU</span><span class="t"></span><span class="s p">CGA<span class="y">AU</span>U<span class="b">U</span>U<span class="y">A</span><span class="b">U</span>UUUUUA<span class="b">U</span>A<span class="b">G</span><span class="b">U</span><span class="g">U</span></span></div>
<div class="cb" style="top:4630px"></div><div class="cell" style="left:492px;top:4635px;color:#1a6f8a">K</div><div class="cell" style="left:652px;top:4635px;color:#1a6f8a">100</div><div class="cell" style="left:848px;top:4635px;color:#155724">A → G</div><div class="a" style="left:1735px;top:4635px"><span class="badge">Rule 5</span></div>
<div class="pb" style="top:4594px"><span class="am" style="left:236px">K</span><span class="br" style="left:219.5px"></span><span class="s">UAAGCUUCAGAAGAA<span class="m">G</span>AAUGUCGGAUU</span><span class="t"></span><span class="s p">CGA<span class="y">AU</span>U<span class="b">U</span>U<span class="y">A</span><span class="b">U</span>UU<span class="b">U</span>UUA<span class="b">U</span>AG<span class="b">U</span><span class="g">U</span></span></div>

<div class="a" style="left:941px;top:4733px;width:12px;height:16px;background:#000"></div>
<div class="a" style="left:941px;top:4764px;width:12px;height:16px;background:#000"></div>
<div class="a" style="left:941px;top:4795px;width:12px;height:16px;background:#000"></div>
<div class="a" style="left:941px;top:4826px;width:12px;height:16px;background:#000"></div>
<div class="a" style="left:941px;top:4857px;width:12px;height:16px;background:#000"></div>

<div class="hl" style="left:54px;top:4963px;width:1810px;background:#e5e5e5"></div>
<div class="btn" style="left:798px;top:4979px;width:236px;height:38px;background:#007bff;line-height:38px;font-size:15px">Accept selected modifications</div>
<div class="btn" style="left:1039px;top:4979px;width:72px;height:38px;background:#868e96;line-height:38px;font-size:15px">Cancel</div>
</div></body></html>
